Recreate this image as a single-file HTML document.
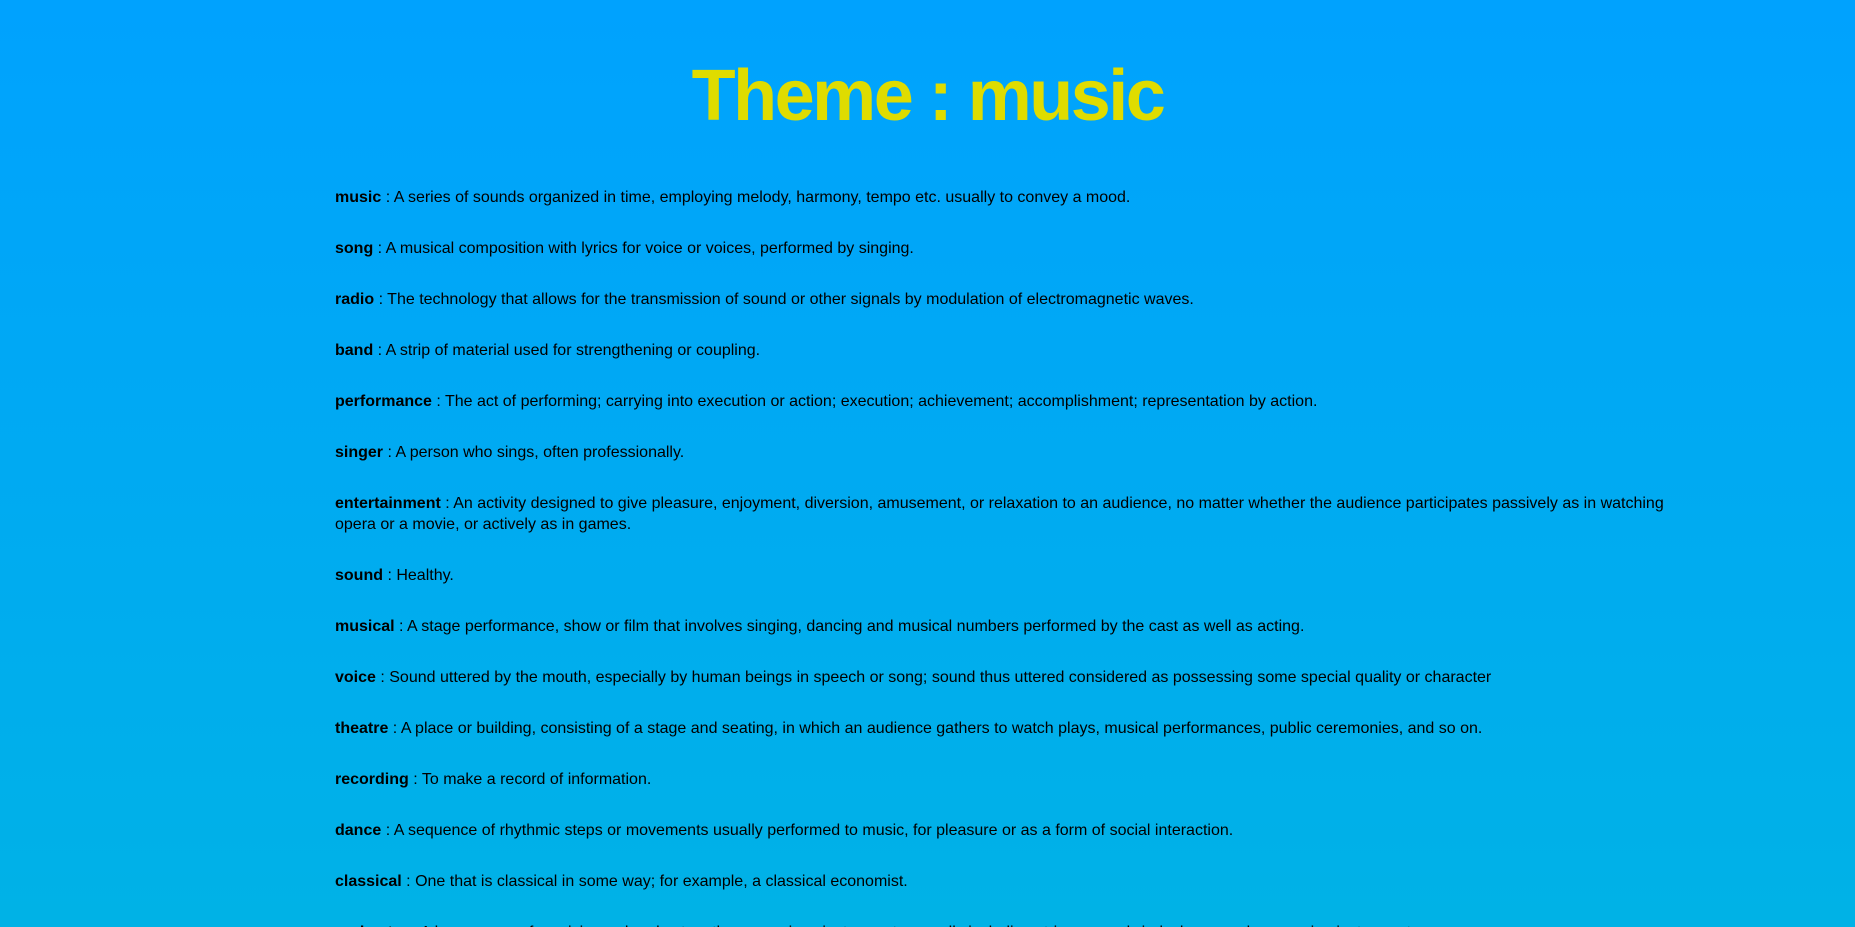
<!DOCTYPE html>
<html><head><meta charset="utf-8"><style>
html,body{margin:0;padding:0;width:1855px;height:927px;overflow:hidden;}
html{background:#00b2e6;}
body{background:linear-gradient(180deg,#00a2fe 0%,#00b2e6 100%);font-family:"Liberation Sans",sans-serif;color:#000;position:relative;}
h1{position:absolute;left:0;width:1855px;top:56px;margin:0;text-align:center;font-size:72px;line-height:80px;font-weight:bold;color:#dfdc00;letter-spacing:-2.5px;}
.c{position:absolute;left:335px;top:187px;width:1450px;}
p{margin:0 0 30px;font-size:16px;line-height:21px;white-space:nowrap;}
</style></head><body>
<h1>Theme : music</h1>
<div class="c">
<p><b>music</b> : A series of sounds organized in time, employing melody, harmony, tempo etc. usually to convey a mood.</p>
<p><b>song</b> : A musical composition with lyrics for voice or voices, performed by singing.</p>
<p><b>radio</b> : The technology that allows for the transmission of sound or other signals by modulation of electromagnetic waves.</p>
<p><b>band</b> : A strip of material used for strengthening or coupling.</p>
<p><b>performance</b> : The act of performing; carrying into execution or action; execution; achievement; accomplishment; representation by action.</p>
<p><b>singer</b> : A person who sings, often professionally.</p>
<p><b>entertainment</b> : An activity designed to give pleasure, enjoyment, diversion, amusement, or relaxation to an audience, no matter whether the audience participates passively as in watching<br>opera or a movie, or actively as in games.</p>
<p><b>sound</b> : Healthy.</p>
<p><b>musical</b> : A stage performance, show or film that involves singing, dancing and musical numbers performed by the cast as well as acting.</p>
<p><b>voice</b> : Sound uttered by the mouth, especially by human beings in speech or song; sound thus uttered considered as possessing some special quality or character</p>
<p><b>theatre</b> : A place or building, consisting of a stage and seating, in which an audience gathers to watch plays, musical performances, public ceremonies, and so on.</p>
<p><b>recording</b> : To make a record of information.</p>
<p><b>dance</b> : A sequence of rhythmic steps or movements usually performed to music, for pleasure or as a form of social interaction.</p>
<p><b>classical</b> : One that is classical in some way; for example, a classical economist.</p>
<p><b>orchestra</b> : A large group of musicians who play together on various instruments, usually including strings, woodwinds, brass and percussion instruments.</p>
</div>
</body></html>
